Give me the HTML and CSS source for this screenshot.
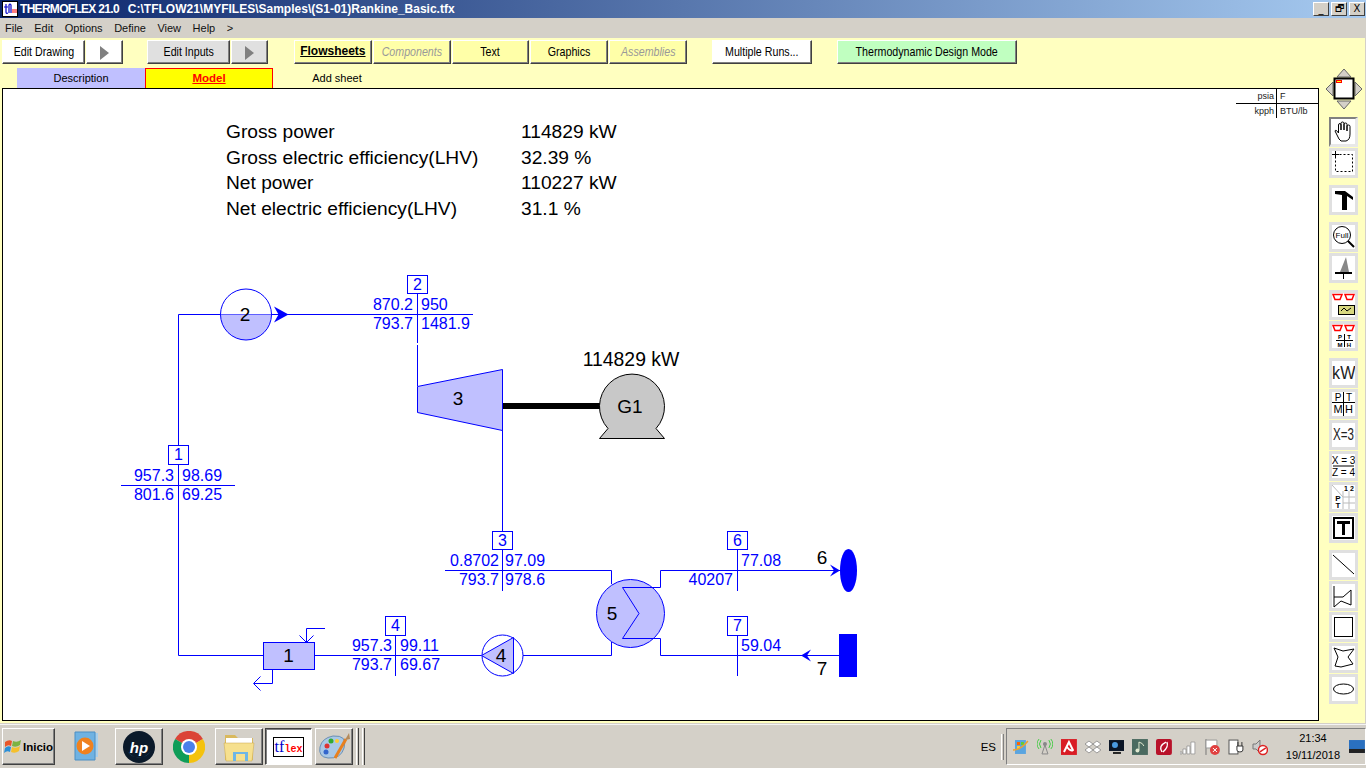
FILE: index.html
```html
<!DOCTYPE html>
<html>
    <head>
        <title>THERMOFLEX 21.0</title>
        <meta name="viewport" content="width=device-width, initial-scale=1.0">
        <link rel="stylesheet" href="styles.css">
    </head>
    <body>
        <div class="titlebar">
            <svg class="app-icon" width="16" height="16" viewBox="0 0 16 16">
                <rect x="0.5" y="0.5" width="15" height="15" fill="#fff" stroke="#000"/>
                <path d="M2 6H6M4 3V11Q4 13 6 12M7 12V4Q8 2 9 4V12" fill="none" stroke="#00c" stroke-width="1.2"/>
                <path d="M10 9H15M10 11H15" stroke="#f00"/>
            </svg>
            <span class="title-app">THERMOFLEX 21.0</span>
            <span class="title-path">C:\TFLOW21\MYFILES\Samples\(S1-01)Rankine_Basic.tfx</span>
            <div class="win-buttons">
                <span class="win-btn">_</span>
                <span class="win-btn">🗗</span>
                <span class="win-btn">X</span>
            </div>
        </div>
        <div class="menubar">
            <span class="menu-item">File</span>
            <span class="menu-item">Edit</span>
            <span class="menu-item">Options</span>
            <span class="menu-item">Define</span>
            <span class="menu-item">View</span>
            <span class="menu-item">Help</span>
            <span class="menu-item">&gt;</span>
        </div>
        <div class="work">
            <div class="main">
                <div class="toolbar">
                    <button class="btn w83 white"><span class="cap">Edit Drawing</span></button>
                    <button class="btn w37 white"><span class="play"></span></button>
                    <button class="btn w83 grey gap23"><span class="cap">Edit Inputs</span></button>
                    <button class="btn w37 grey"><span class="play"></span></button>
                    <button class="btn w77 gap25 strong">Flowsheets</button>
                    <button class="btn w77 off"><span class="cap">Components</span></button>
                    <button class="btn w77"><span class="cap">Text</span></button>
                    <button class="btn w77"><span class="cap">Graphics</span></button>
                    <button class="btn w77 off"><span class="cap">Assemblies</span></button>
                    <button class="btn w100 white gap24"><span class="cap">Multiple Runs...</span></button>
                    <button class="btn w180 green gap24"><span class="cap">Thermodynamic Design Mode</span></button>
                </div>
                <div class="tabs">
                    <div class="tab tab-desc">Description</div>
                    <div class="tab tab-model">Model</div>
                    <div class="tab">Add sheet</div>
                </div>
                <div class="canvas">
                    <svg class="diagram" width="1315" height="631" viewBox="3 89 1315 631">
                        <!-- pipes -->
                        <g class="pipe">
                            <path d="M473 314.5H178.5V655.5H263.5"/>
                            <path d="M417.5 293V343M417.5 345V386"/>
                            <path d="M121 485.5H235"/>
                            <path d="M502.5 430V591M445 570.5H611.5V584"/>
                            <path d="M315 655.5H481M523 655.5H611.5V642"/>
                            <path d="M395.5 635V676M737.5 550V591M737.5 635V676"/>
                            <path d="M325 628.5H306.5V642M299.5 635.5L306.5 642.5L313.5 635.5"/>
                            <path d="M272.5 669V683.5H254M260.5 676.5L253.5 683.5L260.5 690.5"/>
                        </g>
                        <!-- stream number boxes -->
                        <g class="box">
                            <rect x="407.5" y="275.5" width="20" height="18"/>
                            <rect x="168.5" y="445.5" width="20" height="19"/>
                            <rect x="492.5" y="531.5" width="20" height="18"/>
                            <rect x="385.5" y="616.5" width="20" height="19"/>
                            <rect x="727.5" y="531.5" width="20" height="18"/>
                            <rect x="727.5" y="616.5" width="20" height="19"/>
                        </g>
                        <!-- boiler -->
                        <path class="fill" d="M220.5 314.5A25.5 25.5 0 0 0 271.5 314.5Z"/>
                        <circle class="pipe" cx="246" cy="314.5" r="25.5"/>
                        <path class="solid" d="M274 306.5L288.5 314.5L274 322.5L278.5 314.5Z"/>
                        <!-- turbine and generator -->
                        <path class="fill line" d="M417.5 386.5L502.5 369.5V430.5L417.5 412.5Z"/>
                        <rect class="shaft" x="503" y="403" width="97" height="6"/>
                        <path class="gen" d="M599.5 438.5L608 428.5A32.5 32.5 0 1 1 656 428.5L664.5 438.5Z"/>
                        <!-- heater, pump, condenser -->
                        <rect class="fill line" x="263.5" y="642.5" width="51" height="27"/>
                        <circle class="pipe" cx="502.5" cy="655.5" r="20.5"/>
                        <path class="fill line" d="M481.5 655.5L513.5 637.5V673.5Z"/>
                        <circle class="fill line" cx="630.5" cy="613.5" r="34"/>
                        <path class="pipe" d="M840 570.5H660.5V587.5H622.5L639 613.5L622.5 638.5H660.5V655.5H840"/>
                        <!-- sources and sinks -->
                        <path class="solid" d="M830 564.5L840 570.5L830 576.5L834 570.5Z"/>
                        <ellipse class="solid" cx="848.5" cy="570.5" rx="8.5" ry="21.5"/>
                        <path class="solid" d="M811 649.5L801 655.5L811 661.5L807 655.5Z"/>
                        <rect class="solid" x="839" y="634" width="18" height="43"/>

                        <g class="num">
                            <text x="245" y="321">2</text>
                            <text x="458" y="405">3</text>
                            <text x="630" y="413">G1</text>
                            <text x="288.5" y="662">1</text>
                            <text x="501" y="662">4</text>
                            <text x="612" y="620">5</text>
                            <text x="822" y="564">6</text>
                            <text x="822" y="675">7</text>
                            <text class="kw" x="631" y="366">114829 kW</text>
                        </g>
                        <g class="val mid">
                            <text x="417.5" y="290">2</text>
                            <text x="178.5" y="460">1</text>
                            <text x="502.5" y="546">3</text>
                            <text x="395.5" y="631">4</text>
                            <text x="737.5" y="546">6</text>
                            <text x="737.5" y="631">7</text>
                        </g>
                        <g class="val end">
                            <text x="413" y="310">870.2</text>
                            <text x="413" y="329">793.7</text>
                            <text x="174" y="481">957.3</text>
                            <text x="174" y="500">801.6</text>
                            <text x="499" y="566">0.8702</text>
                            <text x="499" y="585">793.7</text>
                            <text x="392" y="651">957.3</text>
                            <text x="392" y="670">793.7</text>
                            <text x="733" y="585">40207</text>
                        </g>
                        <g class="val">
                            <text x="421" y="310">950</text>
                            <text x="421" y="329">1481.9</text>
                            <text x="182" y="481">98.69</text>
                            <text x="182" y="500">69.25</text>
                            <text x="505" y="566">97.09</text>
                            <text x="505" y="585">978.6</text>
                            <text x="400" y="651">99.11</text>
                            <text x="400" y="670">69.67</text>
                            <text x="741" y="566">77.08</text>
                            <text x="741" y="651">59.04</text>
                        </g>
                    </svg>
                    <div class="summary">
                        <span>Gross power</span><span>114829 kW</span>
                        <span>Gross electric efficiency(LHV)</span><span>32.39 %</span>
                        <span>Net power</span><span>110227 kW</span>
                        <span>Net electric efficiency(LHV)</span><span>31.1 %</span>
                    </div>
                    <div class="units">
                        <span class="u-left u-top">psia</span><span class="u-top">F</span>
                        <span class="u-left">kpph</span><span>BTU/lb</span>
                    </div>
                </div>
            </div>
            <div class="side">
                <svg class="navigator" width="38" height="42" viewBox="0 0 38 42">
                    <path class="nav-arrow" d="M19 1L12 9H26ZM19 41L12 33H26ZM1 21L8 14V28ZM37 21L30 14V28Z"/>
                    <rect x="9.5" y="10.5" width="19" height="20" fill="#fff" stroke="#000" stroke-width="2"/>
                    <rect x="11.5" y="12.5" width="5" height="2" fill="#ff0" stroke="#f00"/>
                </svg>
                <div class="tool sunken first">
                    <svg viewBox="0 0 23 24"><path class="ink" d="M5 15L3 11Q3 10 4.5 10.5L6.5 13V5Q6.5 3.5 8 3.5Q9 3.5 9 5V10V3.5Q9 2 10.5 2Q12 2 12 3.5V10V4Q12 3 13.5 3Q15 3 15 4.5V11V6Q15 5 16.5 5Q18 5 18 6.5V14Q18 20 14 21H9Q7 20 5 15Z"/></svg>
                </div>
                <div class="tool">
                    <svg viewBox="0 0 23 24"><rect class="ink" x="3.5" y="3.5" width="17" height="17" stroke-dasharray="2 2"/><path class="ink" d="M3.5 0V6M0 3.5H7"/></svg>
                </div>
                <div class="tool group">
                    <svg viewBox="0 0 23 24"><path d="M3 3H13L21 9V12L15 8V22H10V7L3 6Z"/></svg>
                </div>
                <div class="tool group">
                    <svg viewBox="0 0 23 24"><circle class="ink" cx="10" cy="10" r="8.5"/><text class="ico-text" x="10" y="13" font-size="8">Full</text><path class="ink thick" d="M16 16L22 22"/></svg>
                </div>
                <div class="tool">
                    <svg viewBox="0 0 23 24"><path d="M14 1L8 16H17Z" fill="#888"/><path class="ink thick" d="M3 17H20"/><path class="ink" d="M11.5 17V23"/></svg>
                </div>
                <div class="tool group">
                    <svg viewBox="0 0 23 24"><path class="pocket" d="M1 1.5H10L8 6.5H3ZM13 1.5H22L20 6.5H15Z"/><rect x="6.5" y="12.5" width="16" height="9" fill="#d8d880" stroke="#000"/><path class="ink" d="M9 18L12 15L15 18L19 15"/></svg>
                </div>
                <div class="tool">
                    <svg viewBox="0 0 23 24"><path class="pocket" d="M1 1.5H10L8 6.5H3ZM13 1.5H22L20 6.5H15Z"/><path class="ink" d="M4 16.5H21M12.5 10V23"/><text class="ico-text bold" x="8" y="15" font-size="6">P</text><text class="ico-text bold" x="17" y="15" font-size="6">T</text><text class="ico-text bold" x="8" y="23" font-size="6">M</text><text class="ico-text bold" x="17" y="23" font-size="6">H</text></svg>
                </div>
                <div class="tool group"><span class="tool-text big">kW</span></div>
                <div class="tool">
                    <svg viewBox="0 0 23 24"><path class="ink" d="M0 10.5H23M11.5 0V24"/><text class="ico-text" x="6" y="8.5" font-size="10">P</text><text class="ico-text" x="17" y="8.5" font-size="10">T</text><text class="ico-text" x="6" y="21" font-size="11">M</text><text class="ico-text" x="17" y="21" font-size="11">H</text></svg>
                </div>
                <div class="tool"><span class="tool-text">X=3</span></div>
                <div class="tool">
                    <svg viewBox="0 0 23 24"><text class="ico-text" x="11.5" y="10" font-size="10">X = 3</text><path class="ink" d="M1 12H22"/><text class="ico-text" x="11.5" y="22" font-size="10">Z = 4</text></svg>
                </div>
                <div class="tool">
                    <svg viewBox="0 0 23 24"><path d="M11 12H23M11 18H23M11 6V24M17 6V24M0 0L11 12" fill="none" stroke="#bbb"/><text class="ico-text bold" x="14" y="6" font-size="7">1</text><text class="ico-text bold" x="20" y="6" font-size="7">2</text><text class="ico-text bold" x="6" y="16" font-size="8">P</text><text class="ico-text bold" x="6" y="23" font-size="8">T</text></svg>
                </div>
                <div class="tool">
                    <svg viewBox="0 0 23 24"><rect class="ink thick" x="2" y="2" width="19" height="20"/><path d="M5 5H18V8H13V19H10V8H5Z"/></svg>
                </div>
                <div class="tool group"><svg viewBox="0 0 23 24"><path class="ink" d="M1 2L22 21"/></svg></div>
                <div class="tool"><svg viewBox="0 0 23 24"><path class="ink" d="M2 2V23L9 17L19 21V6L11 13H2"/></svg></div>
                <div class="tool"><svg viewBox="0 0 23 24"><rect class="ink" x="2.5" y="2.5" width="18" height="19"/></svg></div>
                <div class="tool"><svg viewBox="0 0 23 24"><path class="ink" d="M2 2L11 5L22 3L16 11L21 18L9 21L3 20L6 11Z"/></svg></div>
                <div class="tool"><svg viewBox="0 0 23 24"><ellipse class="ink" cx="11.5" cy="12" rx="10" ry="5"/></svg></div>
            </div>
        </div>
        <div class="taskbar">
            <button class="task start">
                <svg width="18" height="18" viewBox="0 0 18 18"><path d="M1 4Q5 1 8 3L7 8Q4 6 1 9Z" fill="#e8562a"/><path d="M9 3Q13 5 17 2L16 7Q12 10 8 8Z" fill="#7cb342"/><path d="M1 10Q4 7 7 9L6 14Q3 12 0 15Z" fill="#2a8fd8"/><path d="M8 9Q12 11 16 8L15 13Q11 16 7 14Z" fill="#f5c02c"/></svg>
                Inicio
            </button>
            <div class="task flat first-app">
                <svg width="32" height="34" viewBox="0 0 32 34"><path d="M8 3H25V27H8Z" fill="#a9cfea"/><path d="M2 2H22V30H2Z" fill="#6fb2e2" stroke="#4a8ec4"/><circle cx="12" cy="16" r="8.5" fill="#f0811e"/><path d="M9 11L17 16L9 21Z" fill="#fff"/></svg>
            </div>
            <button class="task">
                <svg width="32" height="32" viewBox="0 0 32 32"><circle cx="16" cy="16" r="16" fill="#0b1a2a"/><path d="M4 20Q16 34 28 20A14 14 0 0 1 4 20Z" fill="#24506f"/><text class="hp" x="16" y="22">hp</text></svg>
            </button>
            <div class="task flat">
                <svg width="32" height="32" viewBox="0 0 32 32"><path d="M16 16L2.1 8A16 16 0 0 1 29.9 8Z" fill="#db4437"/><path d="M16 16L29.9 8A16 16 0 0 1 16 32Z" fill="#f4c20d"/><path d="M16 16L16 32A16 16 0 0 1 2.1 8Z" fill="#0f9d58"/><circle cx="16" cy="16" r="8" fill="#fff"/><circle cx="16" cy="16" r="6" fill="#4a80ea"/></svg>
            </div>
            <button class="task">
                <svg width="32" height="30" viewBox="0 0 32 30"><path d="M2 3H12L15 6H30V28H2Z" fill="#d9b95e"/><rect x="3" y="6" width="26" height="8" fill="#fff"/><path d="M1 11H31L29 29H3Z" fill="#f6e08e" stroke="#c9a64a" stroke-width="0.5"/><path d="M13 22H22V29H25V20H10V29H13Z" fill="#6db6e6"/></svg>
            </button>
            <button class="task pressed">
                <span class="tflex"><span class="tf">tf</span><span class="lex">lex</span></span>
            </button>
            <button class="task paint">
                <svg width="32" height="30" viewBox="0 0 32 30"><path d="M15 4Q30 3 26 16Q23 27 10 26Q0 25 2 15Q4 6 15 4Z" fill="#a9c8e6" stroke="#6a8fb4"/><circle cx="9" cy="14" r="2.5" fill="#d33"/><circle cx="13" cy="9" r="2.5" fill="#3a3"/><circle cx="19" cy="9" r="2" fill="#fc3"/><circle cx="8" cy="20" r="2.5" fill="#36c"/><path d="M17 26L28 7" stroke="#e8801e" stroke-width="3"/><path d="M27 8L31 1L32 7Z" fill="#b48a5a"/></svg>
            </button>
            <span class="grip"></span>
            <span class="grip"></span>
            <span class="lang">ES</span>
            <span class="grip tall"></span>
            <div class="tray">
                <svg width="16" height="18" viewBox="0 0 16 18"><rect x="2" y="2" width="11" height="14" fill="#5aa5e0"/><rect x="4" y="4" width="3" height="3" fill="#f60"/><rect x="8" y="4" width="3" height="3" fill="#6c3"/><rect x="4" y="8" width="3" height="3" fill="#fc3"/><path d="M0 12Q8 12 15 3" fill="none" stroke="#f0a030" stroke-width="1.5"/></svg>
                <svg width="16" height="18" viewBox="0 0 16 18"><path d="M8 7L5 16H11Z" fill="none" stroke="#888"/><circle cx="8" cy="6" r="2" fill="#888"/><path d="M4 2Q1 6 4 10M12 2Q15 6 12 10M2 1Q-2 6 2 11M14 1Q18 6 14 11" fill="none" stroke="#4c4"/></svg>
                <svg width="16" height="18" viewBox="0 0 16 18"><rect y="1" width="16" height="16" fill="#d91c24"/><path d="M3 14L8 4L12 12Q10 14 6 9" fill="none" stroke="#fff" stroke-width="2"/></svg>
                <svg width="16" height="18" viewBox="0 0 16 18"><path d="M4 3L8 6L4 9L0 6ZM12 3L16 6L12 9L8 6ZM4 9L8 12L4 15L0 12ZM12 9L16 12L12 15L8 12Z" fill="#fff" stroke="#777" stroke-width="0.7"/></svg>
                <svg width="16" height="18" viewBox="0 0 16 18"><rect y="2" width="16" height="11" fill="#0b1526"/><circle cx="6" cy="7" r="3" fill="#4a9ae0"/><path d="M4 15H12" stroke="#222" stroke-width="2"/></svg>
                <svg width="16" height="18" viewBox="0 0 16 18"><rect y="1" width="16" height="16" fill="#4a6a60"/><path d="M7 12V4Q11 5 12 8" fill="none" stroke="#dfe8d0"/><circle cx="5.5" cy="12.5" r="2" fill="#dfe8d0"/></svg>
                <svg width="16" height="18" viewBox="0 0 16 18"><rect y="1" width="16" height="16" rx="2" fill="#b8122a"/><path d="M6 14Q2 8 10 4M11 4Q13 9 7 14" fill="none" stroke="#fff" stroke-width="1.4"/></svg>
                <svg width="16" height="18" viewBox="0 0 16 18"><path d="M0 14h2v2H0zM3 11h3v5H3zM7 8h3v8H7zM11 4h4v12h-4z" fill="#fff" stroke="#888" stroke-width="0.7"/></svg>
                <svg width="16" height="18" viewBox="0 0 16 18"><path d="M2 1V17" stroke="#777"/><path d="M2 2H13V10H2Z" fill="#fff" stroke="#999"/><circle cx="11" cy="12" r="5" fill="#e04040"/><path d="M9 10L13 14M13 10L9 14" stroke="#fff"/></svg>
                <svg width="16" height="18" viewBox="0 0 16 18"><rect x="1" y="2" width="9" height="14" fill="#fff" stroke="#555"/><path d="M9 8H15V12Q15 14 12 14T9 12ZM10 8V4M14 8V4" fill="#fff" stroke="#333"/></svg>
                <svg width="16" height="18" viewBox="0 0 16 18"><path d="M1 6H4L8 2V15L4 11H1Z" fill="#ccc" stroke="#777"/><circle cx="11" cy="12" r="4.5" fill="#fff" stroke="#d22" stroke-width="1.5"/><path d="M8 14L14 10" stroke="#d22" stroke-width="1.5"/></svg>
                <div class="clock"><span>21:34</span><span>19/11/2018</span></div>
                <svg class="desk" width="16" height="13" viewBox="0 0 16 13"><rect width="16" height="13" fill="#2a70c0"/><rect y="9" width="16" height="4" fill="#222"/></svg>
            </div>
        </div>
    </body>
</html>
```

FILE: styles.css
```css
html, body {
    margin: 0;
    height: 768px;
    overflow: hidden;
}
body {
    font-family: "Liberation Sans", Arial, sans-serif;
    background-color: #d4d0c8;
}
svg {
    display: block;
}
.titlebar {
    display: flex;
    align-items: center;
    height: 18px;
    padding: 0 1px 0 2px;
    background: linear-gradient(to right, #0a246a, #a6caf0);
    color: #fff;
    font: bold 12px "Liberation Sans", sans-serif;
}
.app-icon {
    margin-right: 2px;
}
.title-app {
    letter-spacing: -0.7px;
}
.title-path {
    margin-left: 9px;
}
.win-buttons {
    display: flex;
    margin-left: auto;
    gap: 2px;
}
.win-btn {
    width: 16px;
    height: 14px;
    box-sizing: border-box;
    background-color: #d4d0c8;
    color: #000;
    font: 10px/12px "DejaVu Sans", sans-serif;
    text-align: center;
    border: 1px solid;
    border-color: #fff #404040 #404040 #fff;
    overflow: hidden;
}
.menubar {
    display: flex;
    align-items: center;
    height: 20px;
    padding-left: 5px;
    font: 11px "Liberation Sans", sans-serif;
    color: #111;
}
.menu-item {
    margin-right: 11.5px;
}
.work {
    display: grid;
    grid-template-columns: 1320px 46px;
    height: 685px;
    background-color: #ffffc0;
    border-bottom: 1px solid #d4d0c8;
}
.main {
    padding-top: 2px;
}
.toolbar {
    display: flex;
    height: 24px;
    padding-left: 2px;
    gap: 1px;
}
.btn {
    box-sizing: border-box;
    padding: 0 0 2px;
    background-color: #ffffa8;
    color: #000;
    font: 13px "Liberation Sans", sans-serif;
    border: 1px solid;
    border-color: #fff #404040 #404040 #fff;
    box-shadow: inset -1px -1px 0 #808080;
    white-space: nowrap;
}
.cap {
    display: inline-block;
    transform: scaleX(0.82);
}
.w37 { width: 37px; padding: 0; }
.w77 { width: 77.75px; }
.w83 { width: 83px; }
.w100 { width: 100px; }
.w180 { width: 180px; }
.gap23 { margin-left: 23px; }
.gap24 { margin-left: 24px; }
.gap25 { margin-left: 25px; }
.white { background-color: #fff; }
.grey { background-color: #e0e0e0; }
.green { background-color: #c0ffc0; }
.strong {
    font-size: 12px;
    font-weight: bold;
    text-decoration: underline;
}
.off {
    font-style: italic;
    color: #999;
}
.play {
    display: inline-block;
    border-left: 9px solid #808080;
    border-top: 7px solid transparent;
    border-bottom: 7px solid transparent;
    vertical-align: middle;
}
.tabs {
    display: flex;
    height: 20px;
    margin: 4px 0 0 17px;
}
.tab {
    box-sizing: border-box;
    width: 128px;
    font: 11px/20px "Liberation Sans", sans-serif;
    text-align: center;
}
.tab-desc {
    background-color: #c0c0ff;
}
.tab-model {
    background-color: #ff0;
    color: #f00;
    font-size: 11.5px;
    font-weight: bold;
    text-decoration: underline;
    line-height: 18px;
    border: 1px solid #f00;
    border-bottom: 0;
}
.canvas {
    position: relative;
    box-sizing: border-box;
    width: 1317px;
    height: 633px;
    margin-left: 2px;
    padding: 30px 0 0 223px;
    background-color: #fff;
    border: 1px solid #000;
}
.diagram {
    position: absolute;
    left: 0;
    top: 0;
}
.pipe {
    fill: none;
    stroke: #00f;
}
.box {
    fill: #fff;
    stroke: #00f;
}
.fill {
    fill: #c0c0ff;
}
.line {
    stroke: #00f;
}
.solid {
    fill: #00f;
}
.shaft {
    fill: #000;
}
.gen {
    fill: #c8c8c8;
    stroke: #000;
}
.num text {
    font: 19px "Liberation Sans", sans-serif;
    fill: #000;
    text-anchor: middle;
}
.num .kw {
    font-size: 19.4px;
}
.val text {
    font: 16px "Liberation Sans", sans-serif;
    fill: #00f;
}
.val.end text {
    text-anchor: end;
}
.val.mid text {
    text-anchor: middle;
}
.summary {
    position: relative;
    display: grid;
    grid-template-columns: 295px auto;
    justify-content: start;
    font: 19.2px/25.5px "Liberation Sans", sans-serif;
    color: #000;
}
.units {
    position: absolute;
    top: 0;
    right: 0;
    display: grid;
    grid-template-columns: 41px 41px;
    height: 29px;
    font: 9px/14px "Liberation Sans", sans-serif;
    color: #222;
}
.units span {
    padding-left: 3px;
    box-sizing: border-box;
}
.units .u-left {
    padding: 0 2px 0 0;
    text-align: right;
    border-right: 1px solid #000;
}
.units .u-top {
    border-bottom: 1px solid #000;
}
.side {
    display: flex;
    flex-direction: column;
    border-right: 1px solid #d4d0c8;
    padding-left: 9px;
}
.navigator {
    margin: 30px 0 0 -4px;
}
.nav-arrow {
    fill: #d4d0c8;
    stroke: #666;
}
.tool {
    box-sizing: border-box;
    display: flex;
    align-items: center;
    justify-content: center;
    width: 29px;
    height: 30px;
    margin-top: 1px;
    background-color: #fff;
    border: 3px solid #e0e0e0;
    overflow: hidden;
}
.tool svg {
    width: 23px;
    height: 24px;
}
.tool.first {
    margin-top: 7px;
    border-color: #808080 #e8e8e8 #e8e8e8 #808080;
    border-width: 2px 3px 3px 2px;
}
.tool.group {
    margin-top: 7px;
}
.ink {
    fill: none;
    stroke: #000;
}
.thick {
    stroke-width: 2;
}
.pocket {
    fill: #fff;
    stroke: #f00;
    stroke-width: 1.5;
}
.ico-text {
    font-family: "Liberation Sans", sans-serif;
    text-anchor: middle;
    fill: #000;
}
.bold {
    font-weight: bold;
}
.tool-text {
    flex: none;
    font: 16px "Liberation Sans", sans-serif;
    color: #222;
    transform: scaleX(0.72);
}
.tool-text.big {
    font-size: 19px;
    transform: scaleX(0.85);
}
.taskbar {
    display: flex;
    align-items: center;
    height: 44px;
    padding: 4px 0 3px 2px;
    box-sizing: border-box;
    gap: 2px;
    color: #000;
    box-shadow: inset 0 1px 0 #f4f4f4;
}
.task {
    box-sizing: border-box;
    display: flex;
    align-items: center;
    justify-content: center;
    width: 48px;
    height: 37px;
    padding: 0;
    background-color: #d4d0c8;
    border: 1px solid;
    border-color: #fff #404040 #404040 #fff;
    box-shadow: inset -1px -1px 0 #808080;
}
.task.flat {
    background: none;
    border-color: transparent;
    box-shadow: none;
}
.task.start {
    width: 53px;
    gap: 1px;
    font: bold 11.5px "Liberation Sans", sans-serif;
}
.first-app {
    margin-left: 8px;
}
.task.pressed {
    width: 47px;
    background-color: #fff;
    border-color: #404040 #fff #fff #404040;
    box-shadow: inset 1px 1px 0 #808080;
}
.task.paint {
    width: 38px;
    margin-left: 1px;
}
.hp {
    font: italic bold 15px "Liberation Sans", sans-serif;
    fill: #fff;
    text-anchor: middle;
}
.tflex {
    display: block;
    width: 31px;
    height: 20px;
    box-sizing: border-box;
    font: 16px/18px "Liberation Serif", serif;
    border: 1px solid #000;
    text-align: center;
    overflow: hidden;
}
.tf { color: #00c; }
.lex { color: #f00; font: bold 10px "Liberation Mono", monospace; }
.grip {
    width: 1px;
    height: 37px;
    margin-left: 1px;
    border-left: 1px solid #fff;
    border-right: 1px solid #404040;
}
.lang {
    margin-left: auto;
    font: 11.5px "Liberation Sans", sans-serif;
}
.grip.tall {
    height: 26px;
    margin: 0 0 0 3px;
    border-right-color: #808080;
}
.tray {
    box-sizing: border-box;
    display: flex;
    align-items: center;
    width: 360px;
    height: 37px;
    padding-left: 6px;
    gap: 8px;
    border: 1px solid;
    border-color: #808080 #fff #fff #808080;
}
.clock {
    display: flex;
    flex-direction: column;
    align-items: center;
    margin-left: 10px;
    font: 11px/16.5px "Liberation Sans", sans-serif;
}
.desk {
    margin-left: 1px;
}
```
